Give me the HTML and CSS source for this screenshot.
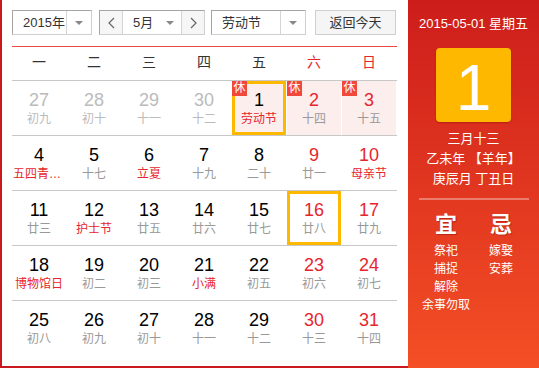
FILE: index.html
```html
<!DOCTYPE html>
<html lang="zh-CN">
  <head>
    <meta charset="UTF-8" />
    <meta name="viewport" content="width=device-width, initial-scale=1.0" />
    <title>万年历</title>
    <link rel="stylesheet" href="styles.css">
  </head>
  <body>
    <div class="rili">
      <div class="principal">
        <div class="barra">
          <div class="seletor ano">
            <span class="valor">2015年</span>
            <span class="seta"><i></i></span>
          </div>
          <div class="grupoMes">
            <span class="botao">
              <svg width="7" height="12" viewBox="0 0 7 12"><polyline points="6,1 1,6 6,11" fill="none" stroke="#666" stroke-width="1.2" /></svg>
            </span>
            <span class="mes">5月<i></i></span>
            <span class="botao">
              <svg width="7" height="12" viewBox="0 0 7 12"><polyline points="1,1 6,6 1,11" fill="none" stroke="#666" stroke-width="1.2" /></svg>
            </span>
          </div>
          <div class="seletor feriado">
            <span class="valor">劳动节</span>
            <span class="seta"><i></i></span>
          </div>
          <div class="hoje">返回今天</div>
        </div>

        <div class="semana">
          <span>一</span><span>二</span><span>三</span><span>四</span><span>五</span><span class="fim">六</span><span class="fim">日</span>
        </div>

        <div class="linha">
          <div class="dia outro"><b>27</b><small>初九</small></div>
          <div class="dia outro"><b>28</b><small>初十</small></div>
          <div class="dia outro"><b>29</b><small>十一</small></div>
          <div class="dia outro"><b>30</b><small>十二</small></div>
          <div class="dia folga marcado"><em>休</em><b>1</b><small class="festa">劳动节</small></div>
          <div class="dia folga fim"><em>休</em><b>2</b><small>十四</small></div>
          <div class="dia folga fim"><em>休</em><b>3</b><small>十五</small></div>
        </div>
        <div class="linha">
          <div class="dia"><b>4</b><small class="festa">五四青年节</small></div>
          <div class="dia"><b>5</b><small>十七</small></div>
          <div class="dia"><b>6</b><small class="festa">立夏</small></div>
          <div class="dia"><b>7</b><small>十九</small></div>
          <div class="dia"><b>8</b><small>二十</small></div>
          <div class="dia fim"><b>9</b><small>廿一</small></div>
          <div class="dia fim"><b>10</b><small class="festa">母亲节</small></div>
        </div>
        <div class="linha">
          <div class="dia"><b>11</b><small>廿三</small></div>
          <div class="dia"><b>12</b><small class="festa">护士节</small></div>
          <div class="dia"><b>13</b><small>廿五</small></div>
          <div class="dia"><b>14</b><small>廿六</small></div>
          <div class="dia"><b>15</b><small>廿七</small></div>
          <div class="dia fim marcado"><b>16</b><small>廿八</small></div>
          <div class="dia fim"><b>17</b><small>廿九</small></div>
        </div>
        <div class="linha">
          <div class="dia"><b>18</b><small class="festa">博物馆日</small></div>
          <div class="dia"><b>19</b><small>初二</small></div>
          <div class="dia"><b>20</b><small>初三</small></div>
          <div class="dia"><b>21</b><small class="festa">小满</small></div>
          <div class="dia"><b>22</b><small>初五</small></div>
          <div class="dia fim"><b>23</b><small>初六</small></div>
          <div class="dia fim"><b>24</b><small>初七</small></div>
        </div>
        <div class="linha">
          <div class="dia"><b>25</b><small>初八</small></div>
          <div class="dia"><b>26</b><small>初九</small></div>
          <div class="dia"><b>27</b><small>初十</small></div>
          <div class="dia"><b>28</b><small>十一</small></div>
          <div class="dia"><b>29</b><small>十二</small></div>
          <div class="dia fim"><b>30</b><small>十三</small></div>
          <div class="dia fim"><b>31</b><small>十四</small></div>
        </div>
      </div>

      <div class="lateral">
        <div class="data">2015-05-01 星期五</div>
        <div class="numero">1</div>
        <div class="lunar">
          <p>三月十三</p>
          <p>乙未年 【羊年】</p>
          <p>庚辰月 丁丑日</p>
        </div>
        <div class="divisor"></div>
        <div class="yiji">
          <div class="coluna">
            <h3>宜</h3>
            <p>祭祀</p>
            <p>捕捉</p>
            <p>解除</p>
            <p>余事勿取</p>
          </div>
          <div class="coluna">
            <h3>忌</h3>
            <p>嫁娶</p>
            <p>安葬</p>
          </div>
        </div>
      </div>
    </div>
  </body>
</html>
```

FILE: styles.css
```css
body {
  margin: 0;
  font-family: "Liberation Sans", "Noto Sans CJK SC", sans-serif;
  background-color: white;
}
.rili {
  display: flex;
  width: 539px;
  height: 368px;
}
.principal {
  width: 385px;
  padding: 10px 11px 0 10px;
  border-left: 2px solid #c9191e;
  border-bottom: 2px solid #c9191e;
  background-color: white;
}

/* barra de cima */
.barra {
  display: flex;
  height: 25px;
  font-size: 13px;
  color: #333;
}
.seletor,
.grupoMes,
.hoje {
  display: flex;
  box-sizing: border-box;
  height: 25px;
  border: 1px solid #cfcfcf;
  border-top-color: #a5a5a5;
  border-left-color: #a5a5a5;
}
.seletor .valor {
  flex: 1;
  line-height: 23px;
  padding-left: 10px;
}
.seta {
  display: flex;
  align-items: center;
  justify-content: center;
  width: 24px;
  border-left: 1px solid #d5d5d5;
}
.seta i,
.mes i {
  width: 0;
  height: 0;
  border-left: 4px solid transparent;
  border-right: 4px solid transparent;
  border-top: 4px solid #888;
}
.ano {
  width: 80px;
}
.grupoMes {
  width: 106px;
  margin-left: 7px;
}
.botao {
  display: flex;
  align-items: center;
  justify-content: center;
  width: 22px;
  background-color: #f6f6f6;
}
.botao:first-child {
  border-right: 1px solid #d5d5d5;
}
.botao:last-child {
  border-left: 1px solid #d5d5d5;
}
.mes {
  flex: 1;
  display: flex;
  align-items: center;
  justify-content: space-between;
  padding: 0 7px 0 10px;
  line-height: 23px;
}
.feriado {
  width: 95px;
  margin-left: 6px;
}
.hoje {
  width: 81px;
  margin-left: 9px;
  justify-content: center;
  line-height: 23px;
  background-color: #f5f5f5;
  border-color: #cfcfcf;
}

/* dias da semana */
.semana {
  display: grid;
  grid-template-columns: repeat(7, 54px);
  column-gap: 1px;
  margin-top: 11px;
  border-top: 1px solid #ec4a40;
  border-bottom: 1px solid #c8c8c8;
  height: 33px;
  line-height: 31px;
  font-size: 14px;
  color: #333;
  text-align: center;
}
.semana .fim {
  color: #e6262c;
}

/* grade dos dias */
.linha {
  display: grid;
  grid-template-columns: repeat(7, 54px);
  column-gap: 1px;
  border-bottom: 1px solid #c8c8c8;
}
.linha:last-child {
  border-bottom: none;
}
.dia {
  position: relative;
  box-sizing: border-box;
  height: 54px;
  padding: 9px 1px 0 1px;
  text-align: center;
}
.dia b {
  display: block;
  font-weight: normal;
  font-size: 18px;
  line-height: 20px;
  color: #000;
}
.dia small {
  display: block;
  font-size: 12px;
  line-height: 18px;
  color: #999;
  white-space: nowrap;
  overflow: hidden;
  text-overflow: ellipsis;
}
.dia.fim b {
  color: #e6262c;
}
.dia small.festa {
  color: #e6262c;
}
.dia.outro b,
.dia.outro small {
  color: #bbb;
}
.folga {
  background-color: #fdeeee;
}
.dia em {
  position: absolute;
  top: 0;
  left: 0;
  width: 15px;
  height: 15px;
  font-style: normal;
  font-size: 12px;
  line-height: 15px;
  color: white;
  background-color: #f2473b;
  z-index: 2;
}
.marcado {
  box-shadow: inset 0 0 0 3px #ffb800;
}

/* lado direito */
.lateral {
  width: 131px;
  height: 368px;
  background: linear-gradient(#cd1d1b, #f44f25);
  color: white;
  text-align: center;
}
.data {
  margin-top: 15px;
  font-size: 13px;
  line-height: 18px;
}
.numero {
  width: 75px;
  height: 74px;
  margin: 15px auto 0 auto;
  border-radius: 4px;
  background-color: #ffb800;
  box-shadow: 0 1px 2px rgba(120, 0, 0, 0.35);
  font-size: 64px;
  line-height: 80px;
}
.lunar {
  margin-top: 7px;
  font-size: 13px;
  line-height: 20px;
}
.lunar p {
  margin: 0;
}
.divisor {
  width: 110px;
  height: 2px;
  margin: 9px auto 0 auto;
  background-color: rgba(255, 255, 255, 0.35);
}
.yiji {
  display: flex;
  justify-content: center;
  margin-top: 11px;
}
.coluna {
  width: 55px;
}
.coluna h3 {
  margin: 0 0 3px 0;
  font-size: 22px;
  line-height: 28px;
  font-weight: bold;
  text-shadow: 1px 1px 1px rgba(100, 0, 0, 0.35);
}
.coluna p {
  margin: 0;
  font-size: 12px;
  line-height: 18px;
  white-space: nowrap;
}
```
